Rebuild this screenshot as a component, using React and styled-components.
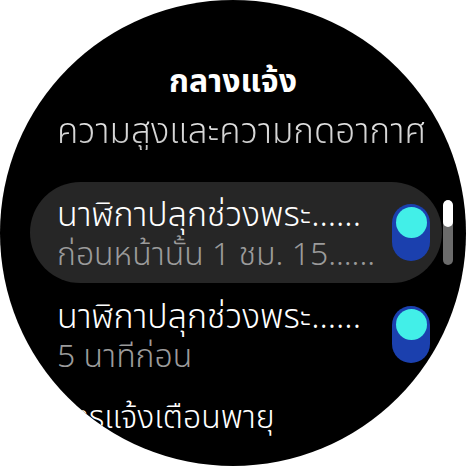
import React from 'react'
import styled, { createGlobalStyle } from 'styled-components'

const Global = createGlobalStyle`
    html, body {
        margin: 0;
        padding: 0;
        background: #ffffff;
    }
    body {
        font-family: "Noto Sans", "Noto Sans Thai", "Loma", "DejaVu Sans", sans-serif;
    }
`

const items = [
    { title: 'นาฬิกาปลุกช่วงพระ......', sub: 'ก่อนหน้านั้น 1 ชม. 15......', on: true, focused: true },
    { title: 'นาฬิกาปลุกช่วงพระ......', sub: '5 นาทีก่อน', on: true, focused: false },
]

function App() {
    return (
        <>
            <Global />
            <Watch>
                <Title>กลางแจ้ง</Title>
                <Heading>ความสูงและความกดอากาศ</Heading>
                {items.map((it, i) => (
                    <Row key={i} focused={it.focused}>
                        <Texts>
                            <RowTitle>{it.title}</RowTitle>
                            <RowSub>{it.sub}</RowSub>
                        </Texts>
                        <Toggle on={it.on}>
                            <Knob />
                        </Toggle>
                    </Row>
                ))}
                <Single>การแจ้งเตือนพายุ</Single>
                <ScrollTrack>
                    <ScrollThumb />
                </ScrollTrack>
            </Watch>
        </>
    )
}

export default App

const Watch = styled.div`
    position: relative;
    width: 466px;
    height: 466px;
    border-radius: 50%;
    background: #000000;
    overflow: hidden;
    display: flex;
    flex-direction: column;
    padding-top: 62px;
    box-sizing: border-box;
`

const Title = styled.div`
    color: #ffffff;
    font-size: 32px;
    font-weight: 700;
    line-height: 36px;
    text-align: center;
`

const Heading = styled.div`
    margin-top: 12px;
    padding-left: 57px;
    font-size: 35px;
    font-weight: 300;
    line-height: 40px;
    white-space: nowrap;
    background: linear-gradient(180deg, #f2f2f2 0%, #c2c2c2 100%);
    -webkit-background-clip: text;
    background-clip: text;
    color: transparent;
`

const Row = styled.div`
    display: flex;
    align-items: center;
    justify-content: space-between;
    height: 101px;
    margin: ${p => (p.focused ? '32px 24px 0 30px' : '1px 24px 0 30px')};
    padding: 0 12px 0 27px;
    border-radius: 51px;
    background: ${p => (p.focused ? '#262626' : 'transparent')};
`

const Texts = styled.div`
    display: flex;
    flex-direction: column;
    white-space: nowrap;
    font-weight: 300;
`

const RowTitle = styled.div`
    color: #ffffff;
    font-size: 34px;
    line-height: 40px;
`

const RowSub = styled.div`
    color: #9b9b9b;
    font-size: 32px;
    line-height: 40px;
`

const Toggle = styled.div`
    flex: none;
    width: 38px;
    height: 57px;
    border-radius: 19px;
    background: ${p => (p.on ? '#1b40ae' : '#555555')};
    display: flex;
    justify-content: center;
    padding-top: 3px;
    box-sizing: border-box;
`

const Knob = styled.div`
    width: 31px;
    height: 31px;
    border-radius: 50%;
    background: #42efe8;
`

const Single = styled.div`
    margin-top: 11px;
    padding-left: 57px;
    color: #ffffff;
    font-size: 32px;
    font-weight: 300;
    line-height: 40px;
    white-space: nowrap;
`

const ScrollTrack = styled.div`
    position: absolute;
    left: 443px;
    top: 200px;
    width: 10px;
    height: 65px;
    border-radius: 5px;
    background: #6b6b6b;
    overflow: hidden;
`

const ScrollThumb = styled.div`
    width: 100%;
    height: 27px;
    border-radius: 5px;
    background: #ffffff;
`
